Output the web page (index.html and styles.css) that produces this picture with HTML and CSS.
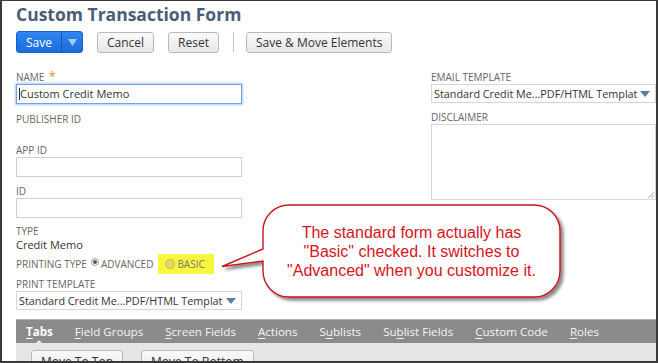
FILE: index.html
```html
<!DOCTYPE html>
<html>
<head>
<meta charset="utf-8">
<link rel="stylesheet" href="styles.css">
</head>
<body>
<div class="frame">
  <h1 class="title">Custom Transaction Form</h1>
  <div class="toolbar">
    <div class="btn-save">
      <span class="save-label">Save</span>
      <span class="save-arrow"><svg width="9" height="7" viewBox="0 0 9 7"><path d="M0 0H9L4.5 7Z" fill="#a9c6ee"/></svg></span>
    </div>
    <div class="btn">Cancel</div>
    <div class="btn">Reset</div>
    <span class="sep"></span>
    <div class="btn btn-last">Save &amp; Move Elements</div>
  </div>

  <div class="form">
    <div class="col-left">
      <div class="f-name">
        <div class="label">Name <span class="req">*</span></div>
        <div class="input focus"><span class="caret"></span>Custom Credit Memo</div>
      </div>
      <div class="f-pub">
        <div class="label">Publisher ID</div>
      </div>
      <div class="f-app">
        <div class="label">App ID</div>
        <div class="input"></div>
      </div>
      <div class="f-id">
        <div class="label">ID</div>
        <div class="input"></div>
      </div>
      <div class="f-type">
        <div class="label">Type</div>
        <div class="value">Credit Memo</div>
      </div>
      <div class="ptype">
        <span class="label">Printing Type</span>
        <svg class="radio-adv" width="8" height="8" viewBox="0 0 8 8"><circle cx="4" cy="4" r="3.5" fill="#fff" stroke="#8a8a8a" stroke-width="0.8"/><circle cx="4" cy="4" r="2" fill="#555"/></svg>
        <span class="label opt">Advanced</span>
        <span class="hl">
          <svg width="10" height="10" viewBox="0 0 10 10"><circle cx="5" cy="5" r="4.4" fill="#dedd68" stroke="#b9b44a" stroke-width="0.9"/></svg>
          <span class="label opt">Basic</span>
        </span>
      </div>
      <div class="f-print">
        <div class="label">Print Template</div>
        <div class="select"><span>Standard Credit Me...PDF/HTML Templat</span><svg width="10" height="6" viewBox="0 0 10 6"><path d="M0 0H10L5 6Z" fill="#5d7aa8"/></svg></div>
      </div>
    </div>
    <div class="col-right">
      <div class="f-email">
        <div class="label">Email Template</div>
        <div class="select"><span>Standard Credit Me...PDF/HTML Templat</span><svg width="10" height="6" viewBox="0 0 10 6"><path d="M0 0H10L5 6Z" fill="#5d7aa8"/></svg></div>
      </div>
      <div class="f-disc">
        <div class="label">Disclaimer</div>
        <div class="textarea">
          <svg class="grip" width="7" height="7" viewBox="0 0 7 7"><path d="M1 7L7 1M4 7L7 4" stroke="#9a9a9a" stroke-width="0.8"/></svg>
        </div>
      </div>
    </div>
  </div>

  <div class="tabbar">
    <span class="tab active"><u>T</u>abs<span class="notch"></span></span>
    <span class="tab"><u>F</u>ield Groups</span>
    <span class="tab"><u>S</u>creen Fields</span>
    <span class="tab"><u>A</u>ctions</span>
    <span class="tab">S<u>u</u>blists</span>
    <span class="tab">Su<u>b</u>list Fields</span>
    <span class="tab"><u>C</u>ustom Code</span>
    <span class="tab"><u>R</u>oles</span>
  </div>
  <div class="tabbody">
    <div class="btn">Move To Top</div>
    <div class="btn">Move To Bottom</div>
  </div>

  <div class="callout">
    <svg width="360" height="110" viewBox="0 0 360 110">
      <defs>
        <filter id="sh" x="-10%" y="-10%" width="125%" height="135%">
          <feDropShadow dx="3" dy="3" stdDeviation="1.8" flood-color="#000" flood-opacity="0.45"/>
        </filter>
      </defs>
      <path d="M79 6H324A26 26 0 0 1 350 32V72A26 26 0 0 1 324 98H79A26 26 0 0 1 53 72V62L12 67.5L53 50V32A26 26 0 0 1 79 6Z" fill="#fff" stroke="#c8161d" stroke-width="1.4" filter="url(#sh)"/>
    </svg>
    <div class="callout-text">The standard form actually has<br>"Basic" checked. It switches to<br>"Advanced" when you customize it.</div>
  </div>
</div>
</body>
</html>
```
FILE: styles.css
```css
* { box-sizing: border-box; }
html, body { margin: 0; padding: 0; background: #fff; }
body { font-family: "Open Sans", "Liberation Sans", sans-serif; }

.frame {
  width: 658px;
  height: 363px;
  border-style: solid;
  border-color: #3a3a3a;
  border-width: 1px 2px 2px 2px;
  position: relative;
  overflow: hidden;
  background: #fff;
}

.title {
  margin: 0 0 0 14px;
  height: 26px;
  font-size: 17.5px;
  font-weight: 700;
  line-height: 26px;
  color: #4b5c78;
}

.toolbar {
  display: flex;
  align-items: center;
  gap: 14px;
  height: 22px;
  margin: 4px 0 0 14px;
}

.btn-save {
  display: flex;
  width: 67px;
  height: 22px;
  border: 1px solid #1760c6;
  border-radius: 3px;
  background: linear-gradient(#2f86f0, #1c6bdc);
  color: #fff;
  font-size: 12px;
}
.save-label {
  width: 45px;
  display: flex;
  align-items: center;
  justify-content: center;
  border-right: 1px solid #1457b5;
}
.save-arrow {
  flex: 1;
  display: flex;
  align-items: center;
  justify-content: center;
}

.btn {
  height: 21px;
  padding: 0 9px;
  display: flex;
  align-items: center;
  border: 1px solid #b9b9b9;
  border-radius: 3px;
  background: linear-gradient(#fafafa, #e8e8e8);
  font-size: 12px;
  color: #333;
  white-space: nowrap;
}
.btn-last { margin-left: -2px; }

.sep {
  width: 1px;
  height: 20px;
  background: #c4c4c4;
}

.form {
  display: flex;
  margin: 18px 0 0 14px;
}
.col-left { width: 226px; }
.col-right { width: 225px; margin-left: 189px; }

.label {
  font-size: 10px;
  line-height: 13px;
  color: #666;
  text-transform: uppercase;
  white-space: nowrap;
}
.req {
  color: #e0891a;
  font-size: 12px;
  line-height: 10px;
  margin-left: 2px;
}

.input {
  height: 20px;
  border: 1px solid #cfcfcf;
  background: #fff;
  font-size: 11px;
  line-height: 18px;
  color: #333;
  padding: 0 2px;
  white-space: nowrap;
  display: flex;
  align-items: center;
}
.input.focus {
  border-color: #6fa4e4;
  box-shadow: 0 0 2px 1px #aecbf0;
}
.caret {
  width: 1px;
  height: 12px;
  background: #333;
}

.value {
  font-size: 11px;
  line-height: 14px;
  color: #333;
}

.select {
  height: 19px;
  border: 1px solid #d6d6d6;
  display: flex;
  align-items: center;
  justify-content: space-between;
  padding: 0 5px 0 2px;
  font-size: 10.8px;
  color: #333;
  white-space: nowrap;
  overflow: hidden;
}

.f-name { margin-bottom: 9px; }
.f-pub { height: 22px; margin-bottom: 9px; }
.f-app { margin-bottom: 8px; }
.f-id { margin-bottom: 7px; }
.f-type { margin-bottom: 2px; }

.ptype {
  display: flex;
  align-items: center;
  height: 20px;
  margin-bottom: 4px;
}
.radio-adv { margin: 0 2px 4px 4px; }
.opt { line-height: 20px; }
.hl {
  display: flex;
  align-items: center;
  gap: 2px;
  height: 20px;
  margin-left: 5px;
  padding: 0 9px 0 7px;
  background: #f7f53e;
}
.hl .label { color: #777; }

.f-email { margin-bottom: 8px; }
.textarea {
  position: relative;
  height: 76px;
  border: 1px solid #d6d6d6;
  background: #fff;
}
.grip {
  position: absolute;
  right: 1px;
  bottom: 1px;
}

.tabbar {
  display: flex;
  align-items: center;
  gap: 22px;
  height: 24px;
  margin: 9px 0 0 14px;
  padding-left: 10px;
  border-top: 1px solid #b3b3b3;
  background: #8b8b8b;
}
.tab {
  position: relative;
  font-size: 11.6px;
  color: #f4f4f4;
  white-space: nowrap;
}
.tab u { text-underline-offset: 2px; }
.tab.active { font-weight: 700; color: #fff; }
.notch {
  position: absolute;
  left: 50%;
  bottom: -5px;
  margin-left: -4px;
  width: 0;
  height: 0;
  border-left: 4px solid transparent;
  border-right: 4px solid transparent;
  border-bottom: 4px solid #e6e6e6;
}

.tabbody {
  display: flex;
  gap: 18px;
  height: 40px;
  margin-left: 14px;
  padding: 7px 0 0 15px;
  background: #e6e6e6;
}
.tabbody .btn { height: 22px; }

.callout {
  position: absolute;
  left: 208px;
  top: 198px;
  width: 360px;
  height: 110px;
}
.callout svg { display: block; }
.callout-text {
  position: absolute;
  left: 53px;
  top: 24px;
  width: 297px;
  text-align: center;
  font-family: "Liberation Sans", Arial, sans-serif;
  font-size: 16px;
  line-height: 19px;
  color: #d6141c;
}
```
